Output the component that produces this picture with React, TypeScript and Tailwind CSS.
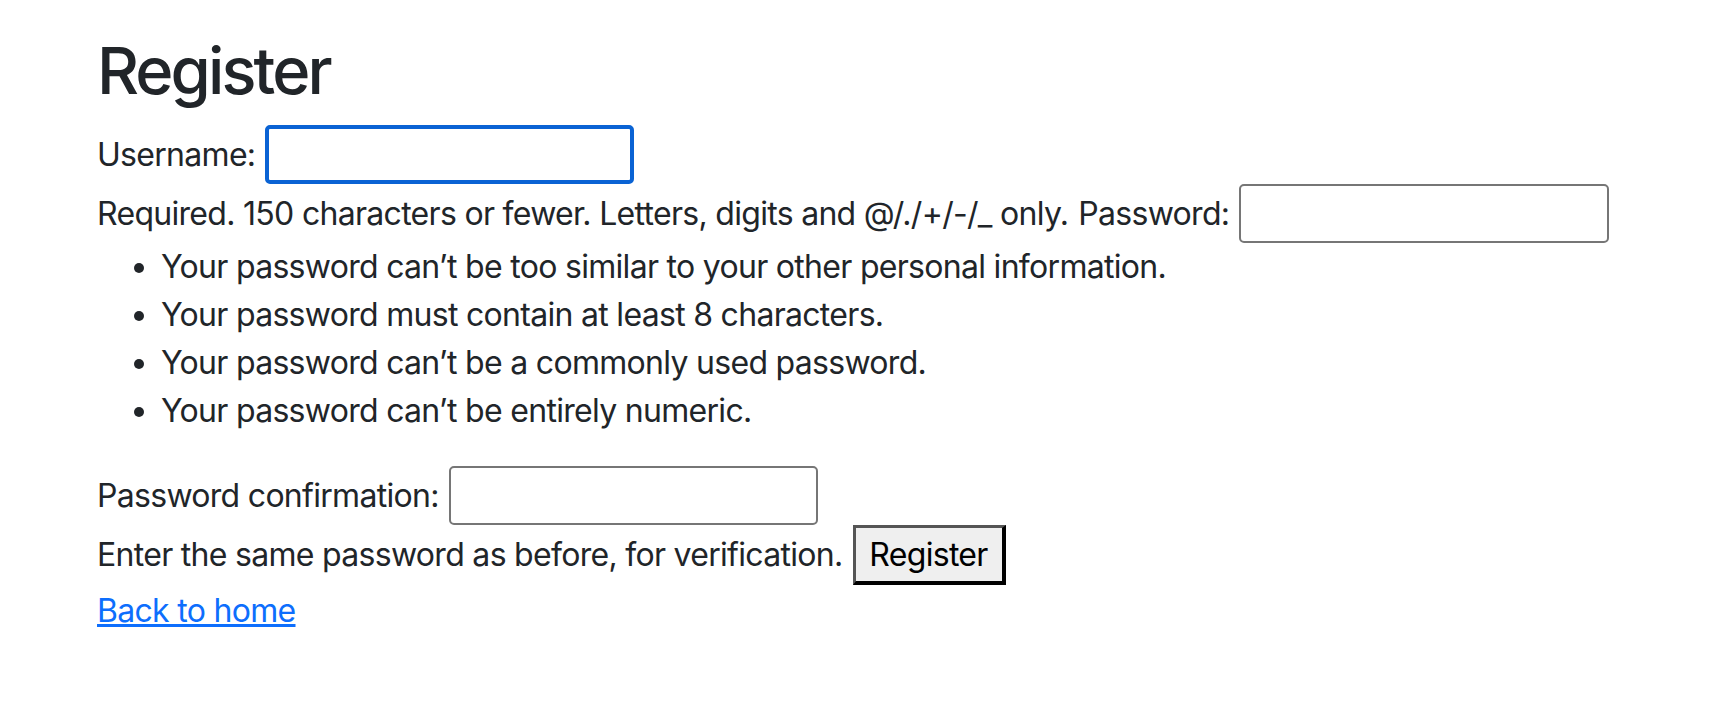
import React from "react";

export default function App() {
  return (
    <div
      className="min-h-[702px] w-full bg-white pl-[97px] pt-[31px] text-[32px] leading-[48px] tracking-[-0.7px] text-[#212529]"
      style={{ fontFamily: "Inter, 'Noto Sans', sans-serif" }}
    >
      <h1 className="mb-[14px] text-[65px] font-medium leading-[80px] tracking-[-2.9px]">Register</h1>
      <form onSubmit={(e) => e.preventDefault()}>
        <div className="flex h-[59px] items-center gap-[10px]">
          <label htmlFor="u">Username:</label>
          <input
            id="u"
            type="text"
            className="box-border h-[59px] w-[369px] rounded-[5px] border-[4px] border-[#0a63d4] bg-white outline-none"
          />
        </div>
        <div className="flex h-[59px] items-center gap-[10px]">
          <span>Required. 150 characters or fewer. Letters, digits and @/./+/-/_ only.</span>
          <label htmlFor="p1">Password:</label>
          <input
            id="p1"
            type="password"
            className="box-border h-[59px] w-[370px] rounded-[5px] border-2 border-[#767676] bg-white outline-none"
          />
        </div>
        <ul className="mb-[31px] list-disc pl-[64px]">
          <li>Your password can’t be too similar to your other personal information.</li>
          <li>Your password must contain at least 8 characters.</li>
          <li>Your password can’t be a commonly used password.</li>
          <li>Your password can’t be entirely numeric.</li>
        </ul>
        <div className="flex h-[59px] items-center gap-[10px]">
          <label htmlFor="p2">Password confirmation:</label>
          <input
            id="p2"
            type="password"
            className="box-border h-[59px] w-[369px] rounded-[5px] border-2 border-[#767676] bg-white outline-none"
          />
        </div>
        <div className="flex h-[60px] items-center gap-[10px]">
          <span>Enter the same password as before, for verification.</span>
          <button
            type="submit"
            className="box-border h-[60px] w-[153px] border-b-4 border-l-[3px] border-r-4 border-t-[3px] border-b-black border-l-[#555] border-r-black border-t-[#555] bg-[#efefef] text-[32px] text-black"
          >
            Register
          </button>
        </div>
      </form>
      <div className="mt-[2px]">
        <a href="#" className="text-[#0d6efd] underline">
          Back to home
        </a>
      </div>
    </div>
  );
}
